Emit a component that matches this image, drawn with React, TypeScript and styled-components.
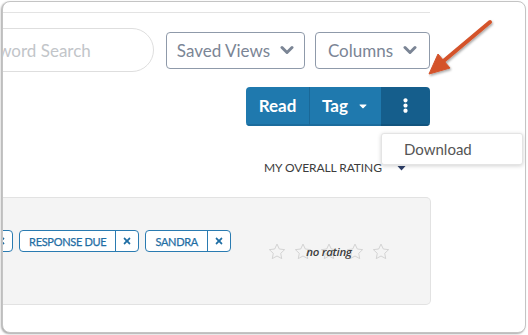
import React from "react";
import styled, { createGlobalStyle } from "styled-components";
import { FaTimes, FaCaretDown, FaEllipsisV } from "react-icons/fa";

const Global = createGlobalStyle`
  html, body {
    margin: 0;
    padding: 0;
    background: #fff;
  }
  body {
    font-family: Lato, "Open Sans", Arial, sans-serif;
    width: 528px;
    height: 335px;
    overflow: hidden;
  }
  * { box-sizing: border-box; }
`;

const Frame = styled.div`
  position: relative;
  margin: 1px 0 0 2px;
  width: 524px;
  height: 332px;
  border: 1px solid #c4c4c4;
  border-radius: 8px;
  background: #fff;
  box-shadow: -1px 1px 2px rgba(0, 0, 0, 0.35);
  overflow: hidden;
`;

const Page = styled.div`
  width: 427px;
  margin-top: 10px;
  border-top: 1px solid #e3e3e3;
`;

const Toolbar = styled.div`
  display: flex;
  align-items: center;
  justify-content: flex-end;
  gap: 10px;
  margin-top: 15px;
  height: 44px;
`;

const Search = styled.input`
  flex-shrink: 0;
  width: 200px;
  height: 44px;
  margin-right: 2px;
  padding: 0 0 0 15px;
  border: 1px solid #dedede;
  border-radius: 22px;
  font-family: Lato, Arial, sans-serif;
  font-size: 17px;
  outline: none;
  &::placeholder {
    color: #c2c5c9;
  }
`;

const OutlineButton = styled.button<{ $w: number }>`
  flex-shrink: 0;
  display: inline-flex;
  align-items: center;
  justify-content: center;
  gap: 10px;
  width: ${(p) => p.$w}px;
  height: 37px;
  border: 1px solid #8f9aaa;
  border-radius: 4px;
  background: #fff;
  color: #7b8595;
  font-family: Lato, Arial, sans-serif;
  font-size: 17px;
  padding: 0;
`;

const ActionRow = styled.div`
  position: relative;
  display: flex;
  justify-content: flex-end;
  margin-top: 15px;
`;

const Group = styled.div`
  position: relative;
  display: flex;
  height: 39px;
  border-radius: 4px;
  overflow: hidden;
`;

const GroupButton = styled.button<{ $dark?: boolean; $w: number; $divider?: boolean }>`
  display: inline-flex;
  align-items: center;
  justify-content: center;
  gap: 9px;
  width: ${(p) => p.$w}px;
  height: 100%;
  padding: 0;
  border: none;
  border-left: ${(p) => (p.$divider ? "1px solid #1a6898" : "none")};
  border-bottom: 2px solid ${(p) => (p.$dark ? "#12547e" : "#1b6c9d")};
  background: ${(p) => (p.$dark ? "#155e8c" : "#1f79ae")};
  color: #fff;
  font-family: Lato, Arial, sans-serif;
  font-weight: 700;
  font-size: 17px;

  svg {
    width: 12px;
    height: 12px;
  }
`;

const DotsIcon = styled(FaEllipsisV)`
  && {
    width: 15px;
    height: 15px;
  }
`;

const Menu = styled.div`
  position: absolute;
  top: calc(100% + 7px);
  right: -93px;
  width: 142px;
  height: 32px;
  display: flex;
  align-items: center;
  padding-left: 22px;
  background: #fff;
  border: 1px solid #e4e4e4;
  border-radius: 3px;
  box-shadow: 0 1px 4px rgba(0, 0, 0, 0.18);
  color: #555;
  font-size: 15px;
`;

const ColumnsGrid = styled.div`
  display: grid;
  grid-template-columns: 261px 1fr;
`;

const Header = styled(ColumnsGrid)`
  margin-top: 30px;
  height: 22px;
  align-items: center;
`;

const HeaderLabel = styled.div`
  grid-column: 2;
  display: flex;
  align-items: center;
  gap: 15px;
  color: #3c3c3c;
  font-size: 12px;
  letter-spacing: -0.1px;
  text-transform: uppercase;
  white-space: nowrap;
`;

const Row = styled(ColumnsGrid)`
  margin-top: 19px;
  margin-right: -1px;
  height: 108px;
  background: #f4f4f4;
  border: 1px solid #e2e2e2;
  border-left: none;
  border-radius: 0 5px 5px 0;
`;

const Tags = styled.div`
  display: flex;
  justify-content: flex-end;
  align-items: flex-start;
  gap: 6px;
  padding: 32px 33px 0 0;
  white-space: nowrap;
`;

const Tag = styled.div`
  flex-shrink: 0;
  display: inline-flex;
  height: 22px;
  border: 1px solid #2a7bb1;
  border-radius: 4px;
  background: #fff;
  color: #1f6ea4;
`;

const TagLabel = styled.span`
  display: flex;
  align-items: center;
  padding: 0 9px;
  font-size: 11px;
  font-weight: 400;
  letter-spacing: -0.3px;
  -webkit-text-stroke: 0.25px #1f6ea4;
`;

const TagRemove = styled.span`
  display: flex;
  align-items: center;
  justify-content: center;
  width: 23px;
  border-left: 1px solid #2a7bb1;
  svg {
    width: 10px;
    height: 10px;
  }
`;

const Rating = styled.div`
  position: relative;
  display: flex;
  align-items: center;
  gap: 8px;
  padding-left: 4px;
  padding-top: 1px;
`;

const NoRating = styled.span`
  position: absolute;
  left: 4px;
  width: 122px;
  text-align: center;
  font-family: "Open Sans", Arial, sans-serif;
  font-style: italic;
  font-weight: 600;
  font-size: 11.5px;
  letter-spacing: -0.3px;
  color: #3e3e3e;
`;

const ArrowLayer = styled.svg`
  position: absolute;
  left: -3px;
  top: -2px;
  pointer-events: none;
`;

function Chevron() {
  return (
    <svg width="14" height="10" viewBox="0 0 14 10">
      <path
        d="M2 2.5l5 5 5-5"
        fill="none"
        stroke="#7b8595"
        strokeWidth="3"
        strokeLinecap="round"
        strokeLinejoin="round"
      />
    </svg>
  );
}

function Star() {
  return (
    <svg width="18" height="17" viewBox="0 0 24 23">
      <path
        d="M12 1.5l3.1 6.6 7.2.9-5.3 5 1.4 7.1L12 17.6l-6.4 3.5 1.4-7.1-5.3-5 7.2-.9z"
        fill="none"
        stroke="#cfcfcf"
        strokeWidth="1.2"
        strokeLinejoin="round"
      />
    </svg>
  );
}

function SortIcon() {
  return (
    <svg width="9" height="8" viewBox="0 0 9 8">
      <rect x="1" y="0" width="7" height="1.5" fill="#2e3f68" />
      <path d="M0.5 3h8L4.5 7.5z" fill="#2e3f68" />
    </svg>
  );
}

const tags = ["PRIORITY", "RESPONSE DUE", "SANDRA"];

export default function App() {
  return (
    <>
      <Global />
      <Frame>
        <Page>
          <Toolbar>
            <Search placeholder="Keyword Search" />
            <OutlineButton $w={139}>
              Saved Views <Chevron />
            </OutlineButton>
            <OutlineButton $w={115}>
              Columns <Chevron />
            </OutlineButton>
          </Toolbar>

          <ActionRow>
            <Group>
              <GroupButton $w={63}>Read</GroupButton>
              <GroupButton $w={72} $divider>
                Tag <FaCaretDown />
              </GroupButton>
              <GroupButton $w={49} $dark>
                <DotsIcon />
              </GroupButton>
            </Group>
            <Menu>Download</Menu>
          </ActionRow>

          <Header>
            <HeaderLabel>
              My Overall Rating <SortIcon />
            </HeaderLabel>
          </Header>

          <Row>
            <Tags>
              {tags.map((t) => (
                <Tag key={t}>
                  <TagLabel>{t}</TagLabel>
                  <TagRemove>
                    <FaTimes />
                  </TagRemove>
                </Tag>
              ))}
            </Tags>
            <Rating>
              <Star />
              <Star />
              <Star />
              <Star />
              <Star />
              <NoRating>no rating</NoRating>
            </Rating>
          </Row>
        </Page>

        <ArrowLayer width="528" height="335" viewBox="0 0 528 335">
          <defs>
            <filter id="sh" x="-20%" y="-20%" width="140%" height="140%">
              <feDropShadow dx="1" dy="1.5" stdDeviation="1" floodColor="#000" floodOpacity="0.35" />
            </filter>
          </defs>
          <g filter="url(#sh)" fill="#d4532b" stroke="#d4532b">
            <line x1="490" y1="22" x2="440" y2="64" strokeWidth="4" strokeLinecap="round" />
            <polygon points="429,74 438,54 450,68" strokeWidth="1" strokeLinejoin="round" />
          </g>
        </ArrowLayer>
      </Frame>
    </>
  );
}
